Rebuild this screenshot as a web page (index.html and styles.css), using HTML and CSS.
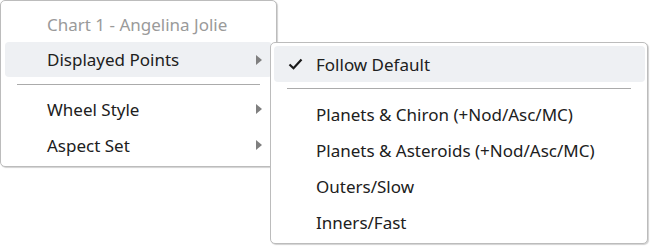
FILE: index.html
```html
<!DOCTYPE html>
<html>
<head>
<meta charset="utf-8">
<link rel="stylesheet" href="styles.css">
</head>
<body>
<div class="stage">
  <div class="menu main">
    <div class="item title">Chart 1 - Angelina Jolie</div>
    <div class="item hover"><span class="label">Displayed Points</span><span class="arrow"></span></div>
    <div class="sep"></div>
    <div class="item"><span class="label">Wheel Style</span><span class="arrow"></span></div>
    <div class="item"><span class="label">Aspect Set</span><span class="arrow"></span></div>
  </div>
  <div class="menu sub">
    <div class="item hover"><span class="check"><svg width="15" height="12" viewBox="0 0 15 12"><path d="M1.5 6.5 L5.5 10.2 L13.5 1.5" fill="none" stroke="#1a1a1a" stroke-width="2.2"/></svg></span><span class="label">Follow Default</span></div>
    <div class="sep"></div>
    <div class="item"><span class="check"></span><span class="label">Planets &amp; Chiron (+Nod/Asc/MC)</span></div>
    <div class="item"><span class="check"></span><span class="label">Planets &amp; Asteroids (+Nod/Asc/MC)</span></div>
    <div class="item"><span class="check"></span><span class="label">Outers/Slow</span></div>
    <div class="item"><span class="check"></span><span class="label">Inners/Fast</span></div>
  </div>
</div>
</body>
</html>
```
FILE: styles.css
```css
html, body {
  margin: 0;
  padding: 0;
  background: #ffffff;
}
body {
  font-family: "Noto Sans", "Open Sans", sans-serif;
  font-size: 17px;
  color: #202020;
}
.stage {
  position: relative;
  width: 652px;
  height: 248px;
}
.menu {
  box-sizing: border-box;
  background: #ffffff;
  border: 1px solid #bcbcbc;
  border-radius: 5px;
  box-shadow: 1px 1px 1px rgba(0, 0, 0, 0.18);
  display: flex;
  flex-direction: column;
}
.main {
  width: 277px;
  height: 167px;
  padding: 5px 4px 3px 4px;
}
.sub {
  position: absolute;
  left: 270px;
  top: 42px;
  width: 378px;
  height: 202px;
  padding: 3px 2px 3px 3px;
}
.item {
  height: 36px;
  display: flex;
  align-items: center;
  border-radius: 4px;
  flex-shrink: 0;
}
.main .item {
  padding-left: 42px;
  padding-right: 10px;
}
.main .item .label {
  flex: 1;
}
.title {
  color: #9a9a9a;
}
.main .hover {
  height: 35px;
  margin-bottom: 1px;
}
.hover {
  background: #eef0f3;
}
.arrow {
  width: 0;
  height: 0;
  border-top: 5px solid transparent;
  border-bottom: 5px solid transparent;
  border-left: 6px solid #7f7f7f;
}
.main .sep {
  height: 2px;
  background: #ababab;
  margin: 6px 12px 6px 12px;
}
.sub .sep {
  height: 2px;
  background: #ababab;
  margin: 6px 14px 7px 13px;
}
.sub .hover {
  height: 36px;
}
.sub .item {
  padding-left: 14px;
}
.check {
  width: 28px;
  display: flex;
  align-items: center;
  margin-right: 0;
}
.check svg {
  display: block;
}
```
